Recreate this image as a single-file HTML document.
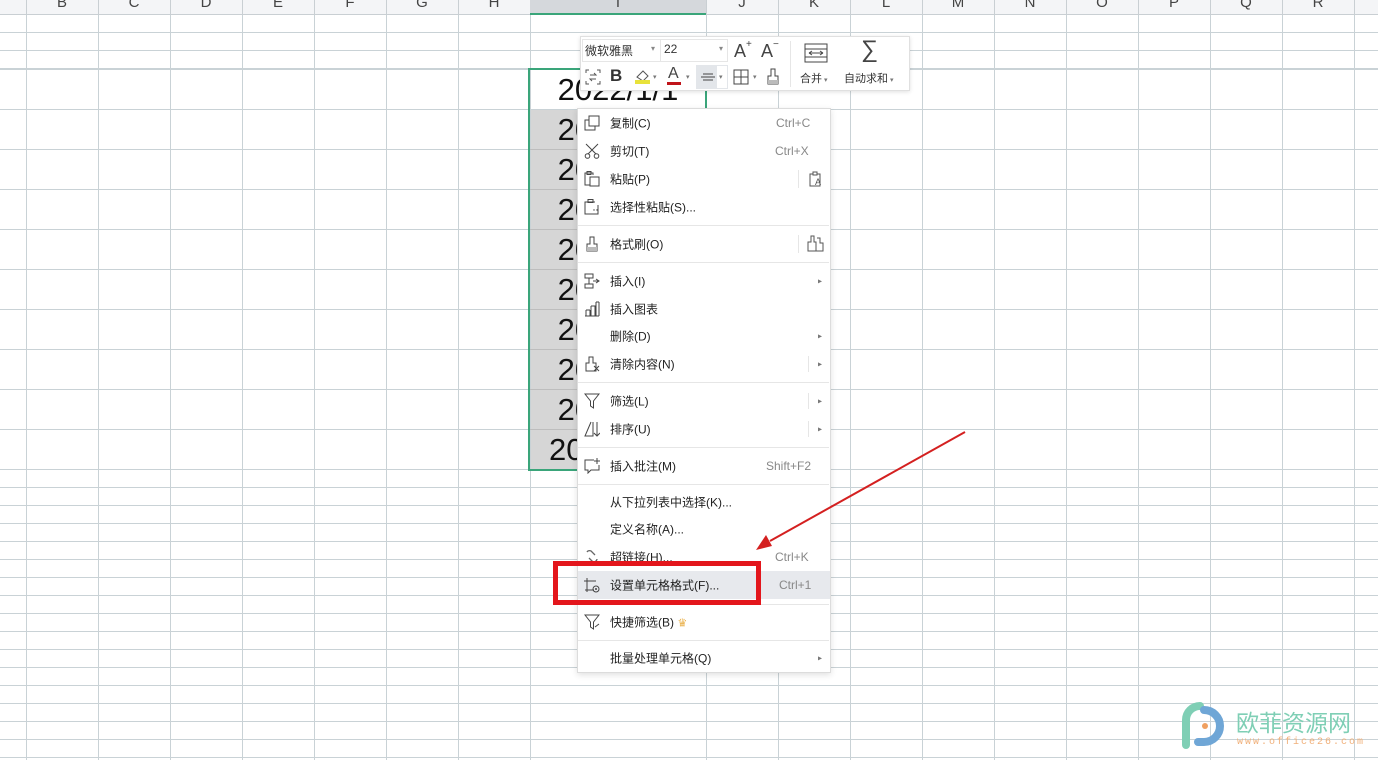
<!DOCTYPE html>
<html><head><meta charset="utf-8"><style>
*{margin:0;padding:0;box-sizing:border-box}
body{width:1378px;height:760px;overflow:hidden;background:#fff;position:relative;font-family:"Liberation Sans","Noto Sans CJK SC",sans-serif;color:#333}
.abs{position:absolute}
.hdr{left:0;top:0;width:1378px;height:15px;background:#f4f5f7;border-bottom:1px solid #c9cfd3}
.hl{position:absolute;top:-6px;font-size:15px;color:#444;transform:translateX(-50%)}
.mi{position:absolute;left:610px;font-size:12px;color:#222;transform:translateY(-50%);white-space:nowrap}
.sc{position:absolute;right:17px;font-size:12px;color:#888;transform:translateY(-50%)}
.sep{position:absolute;left:578px;width:251px;height:1px;background:#e6e6e6}
.ar{position:absolute;left:818px;font-size:8px;color:#777;transform:translateY(-50%)}
.ic{position:absolute;left:584px}
.d{position:absolute;left:530px;width:176px;height:40px;font-size:31px;text-align:center;line-height:42px;color:#111}
</style></head><body>
<div class="abs" style="left:0;top:15px;width:1378px;height:54px;background:repeating-linear-gradient(to bottom,transparent 0 17px,#c9d2d6 17px 18px)"></div>
<div class="abs" style="left:0;top:69px;width:1378px;height:400px;background:repeating-linear-gradient(to bottom,#c9d2d6 0 1px,transparent 1px 40px)"></div>
<div class="abs" style="left:0;top:469px;width:1378px;height:291px;background:repeating-linear-gradient(to bottom,#c9d2d6 0 1px,transparent 1px 18px)"></div>
<div class="abs" style="left:0;top:0;width:531px;height:760px;background:repeating-linear-gradient(to right,transparent 0 26px,#c9d2d6 26px 27px,transparent 27px 72px);background-size:72px 100%"></div>
<div class="abs" style="left:706px;top:0;width:672px;height:760px;background:repeating-linear-gradient(to right,#c9d2d6 0 1px,transparent 1px 72px)"></div>
<div class="abs" style="left:531px;top:110px;width:175px;height:359px;background:#d6d6d6"></div>
<div class="abs" style="left:531px;top:70px;width:175px;height:39px;background:#fff"></div>
<div class="abs" style="left:530px;top:110px;width:176px;height:360px;background:repeating-linear-gradient(to bottom,transparent 0 39px,#bdbdbd 39px 40px)"></div>
<div class="abs hdr"></div>
<div class="abs" style="left:530px;top:0;width:176px;height:15px;background:#d5d8dc;border-bottom:2px solid #3aa57a"></div>
<div class="abs" style="left:0;top:0;width:1378px;height:15px;background:repeating-linear-gradient(to right,transparent 0 26px,#c9cfd3 26px 27px,transparent 27px 72px);background-size:72px 100%;clip-path:inset(0 848px 0 0)"></div>
<div class="abs" style="left:706px;top:0;width:672px;height:15px;background:repeating-linear-gradient(to right,#c9cfd3 0 1px,transparent 1px 72px)"></div>
<div class="hl" style="left:62px">B</div><div class="hl" style="left:134px">C</div><div class="hl" style="left:206px">D</div><div class="hl" style="left:278px">E</div><div class="hl" style="left:350px">F</div><div class="hl" style="left:422px">G</div><div class="hl" style="left:494px">H</div><div class="hl" style="left:618px">I</div><div class="hl" style="left:742px">J</div><div class="hl" style="left:814px">K</div><div class="hl" style="left:886px">L</div><div class="hl" style="left:958px">M</div><div class="hl" style="left:1030px">N</div><div class="hl" style="left:1102px">O</div><div class="hl" style="left:1174px">P</div><div class="hl" style="left:1246px">Q</div><div class="hl" style="left:1318px">R</div>
<div class="d" style="top:69px">2022/1/1</div>
<div class="d" style="top:109px">2022/1/2</div>
<div class="d" style="top:149px">2022/1/3</div>
<div class="d" style="top:189px">2022/1/4</div>
<div class="d" style="top:229px">2022/1/5</div>
<div class="d" style="top:269px">2022/1/6</div>
<div class="d" style="top:309px">2022/1/7</div>
<div class="d" style="top:349px">2022/1/8</div>
<div class="d" style="top:389px">2022/1/9</div>
<div class="d" style="top:429px">2022/1/10</div>
<div class="abs" style="left:528px;top:68px;width:179px;height:403px;border:2px solid #3aa57a"></div>
<div class="abs" style="left:580px;top:36px;width:330px;height:55px;background:#fff;border:1px solid #e0e0e0;box-shadow:0 1px 4px rgba(0,0,0,.12)"></div>
<div class="abs" style="left:582px;top:39px;width:146px;height:23px;border:1px solid #e6e6e6"></div>
<div class="abs" style="left:660px;top:39px;width:1px;height:23px;background:#e6e6e6"></div>
<div class="abs" style="left:585px;top:42px;font-size:12px;color:#333">微软雅黑</div>
<div class="abs" style="left:651px;top:44px;font-size:8px;color:#888">▾</div>
<div class="abs" style="left:664px;top:42px;font-size:12px;color:#333">22</div>
<div class="abs" style="left:719px;top:44px;font-size:8px;color:#888">▾</div>
<div class="abs" style="left:734px;top:39px;font-size:18px;color:#444">A<sup style="font-size:10px;vertical-align:10px">+</sup></div>
<div class="abs" style="left:761px;top:39px;font-size:18px;color:#444">A<sup style="font-size:10px;vertical-align:10px">−</sup></div>
<div class="abs" style="left:790px;top:41px;width:1px;height:46px;background:#e6e6e6"></div>
<svg class="abs" style="left:804px;top:43px" width="24" height="20"><rect x="1" y="1" width="22" height="18" fill="none" stroke="#444"/><line x1="1" y1="6" x2="23" y2="6" stroke="#444"/><line x1="1" y1="14" x2="23" y2="14" stroke="#444"/><path d="M5 10H19M5 10l3-2M5 10l3 2M19 10l-3-2M19 10l-3 2" stroke="#444" fill="none"/></svg>
<div class="abs" style="left:861px;top:36px;font-size:24px;color:#444">∑</div>
<div class="abs" style="left:800px;top:70px;font-size:11px;color:#333">合并<span style="font-size:7px;color:#777"> ▾</span></div>
<div class="abs" style="left:844px;top:70px;font-size:11px;color:#333">自动求和<span style="font-size:7px;color:#777"> ▾</span></div>
<svg class="abs" style="left:585px;top:69px" width="16" height="16"><path d="M1 4V1h3M12 1h3v3M15 12v3h-3M4 15H1v-3" stroke="#555" fill="none"/><path d="M5 6h6l-2-2M11 10H5l2 2" stroke="#555" fill="none"/></svg>
<div class="abs" style="left:610px;top:66px;font-size:17px;font-weight:bold;color:#333">B</div>
<svg class="abs" style="left:634px;top:68px" width="18" height="18"><path d="M3 9l6-6 5 5-5 5z" stroke="#555" fill="none"/><rect x="1" y="12" width="15" height="4" fill="#e8e23a"/></svg>
<div class="abs" style="left:653px;top:73px;font-size:7px;color:#777">▾</div>
<div class="abs" style="left:668px;top:65px;font-size:16px;color:#444">A</div>
<div class="abs" style="left:667px;top:82px;width:14px;height:3px;background:#c0141a"></div>
<div class="abs" style="left:686px;top:73px;font-size:7px;color:#777">▾</div>
<div class="abs" style="left:696px;top:65px;width:32px;height:24px;background:#e3e6ea"></div>
<div class="abs" style="left:717px;top:66px;width:10px;height:22px;background:#fff"></div>
<svg class="abs" style="left:700px;top:71px" width="16" height="12"><path d="M3 3h10M1 6h14M3 9h10" stroke="#444"/></svg>
<div class="abs" style="left:719px;top:73px;font-size:7px;color:#777">▾</div>
<svg class="abs" style="left:733px;top:69px" width="16" height="16"><rect x="1" y="1" width="14" height="14" fill="none" stroke="#444"/><path d="M8 1v14M1 8h14" stroke="#444"/></svg>
<div class="abs" style="left:753px;top:73px;font-size:7px;color:#777">▾</div>
<svg class="abs" style="left:766px;top:68px" width="14" height="18"><path d="M5 1h4v7h3v8H2V8h3z" stroke="#444" fill="none"/><rect x="2" y="12" width="10" height="4" fill="#bbb"/></svg>
<div class="abs" style="left:577px;top:108px;width:254px;height:565px;background:#fff;border:1px solid #dcdcdc;box-shadow:0 2px 6px rgba(0,0,0,.12)"></div>
<div class="abs" style="left:578px;top:571px;width:252px;height:28px;background:#e7e9ed"></div>
<div class="sep" style="top:225px"></div><div class="sep" style="top:262px"></div><div class="sep" style="top:382px"></div><div class="sep" style="top:447px"></div><div class="sep" style="top:484px"></div><div class="sep" style="top:604px"></div><div class="sep" style="top:640px"></div>
<svg class="ic" style="top:115px" width="16" height="16"><rect x="5" y="1" width="10" height="10" fill="none" stroke="#444"/><path d="M5 5H1v10h10v-4" fill="none" stroke="#444"/></svg>
<svg class="ic" style="top:143px" width="16" height="16"><path d="M2 1l10 10M14 1L4 11" stroke="#444"/><circle cx="3.5" cy="13" r="2.3" fill="none" stroke="#444"/><circle cx="12.5" cy="13" r="2.3" fill="none" stroke="#444"/></svg>
<svg class="ic" style="top:171px" width="16" height="16"><path d="M9 4V2H1v12h5" fill="none" stroke="#444"/><rect x="6" y="6" width="9" height="9" fill="none" stroke="#444"/><rect x="3" y="0.5" width="4" height="3" fill="none" stroke="#444"/></svg>
<svg class="ic" style="top:199px" width="16" height="16"><path d="M11 3H1v12h13V6" fill="none" stroke="#444"/><rect x="4" y="0.5" width="5" height="3" fill="none" stroke="#444"/><circle cx="10" cy="11" r=".7" fill="#444"/><circle cx="13" cy="11" r=".7" fill="#444"/></svg>
<svg class="ic" style="top:236px" width="16" height="16"><path d="M6 1h4v7h3v7H3V8h3z" stroke="#444" fill="none"/><rect x="3" y="11" width="10" height="4" fill="#bbb"/></svg>
<svg class="ic" style="top:273px" width="16" height="16"><rect x="1" y="1" width="8" height="4" fill="none" stroke="#444"/><rect x="1" y="11" width="8" height="4" fill="none" stroke="#444"/><path d="M5 5v6M9 8h6M12 6l3 2-3 2" stroke="#444" fill="none"/></svg>
<svg class="ic" style="top:301px" width="16" height="16"><path d="M1 15h14M2 9v6M7 5v10M12 1v14M2 9h4M7 5h5" stroke="#444" fill="none"/><path d="M6 9v6M11 5v10M15 1v14M12 1h3" stroke="#444"/></svg>
<svg class="ic" style="top:356px" width="16" height="16"><path d="M5 1h4v6h3v8H2V7h3z" stroke="#444" fill="none"/><path d="M10 10l5 5M15 10l-5 5" stroke="#444"/></svg>
<svg class="ic" style="top:393px" width="16" height="16"><path d="M1 1h14L9.5 8v7l-3-2V8z" stroke="#444" fill="none"/></svg>
<svg class="ic" style="top:421px" width="16" height="16"><path d="M7 1L1 15h8V1" stroke="#444" fill="none"/><path d="M13 1v14M10 12l3 3 3-3" stroke="#444" fill="none"/></svg>
<svg class="ic" style="top:458px" width="16" height="16"><path d="M10 2H1v10h3v3l3-3h8V7" stroke="#444" fill="none"/><path d="M13 0v6M10 3h6" stroke="#444"/></svg>
<svg class="ic" style="top:549px" width="16" height="16"><path d="M3 3a3 3 0 0 1 5 0l3 3M5 9l3 3a3 3 0 0 0 5-2" stroke="#666" fill="none" stroke-width="1.3"/></svg>
<svg class="ic" style="top:577px" width="16" height="16"><path d="M3 1v14M0 4h12M1 13h9" stroke="#444" fill="none"/><circle cx="12" cy="12" r="3" fill="none" stroke="#444"/><circle cx="12" cy="12" r="1" fill="#444"/></svg>
<svg class="ic" style="top:614px" width="16" height="16"><path d="M1 1h14L9.5 8v7l-3-2V8z" stroke="#444" fill="none"/><path d="M11 13l4-3" stroke="#444"/></svg>
<div class="mi" style="top:123px">复制(C)</div><div class="sc" style="top:123px;left:776px">Ctrl+C</div>
<div class="mi" style="top:151px">剪切(T)</div><div class="sc" style="top:151px;left:775px">Ctrl+X</div>
<div class="mi" style="top:179px">粘贴(P)</div>
<div class="abs" style="left:798px;top:170px;width:1px;height:18px;background:#e6e6e6"></div>
<svg class="abs" style="left:808px;top:171px" width="16" height="16"><path d="M9 3h3v12H2V3h3" stroke="#555" fill="none"/><rect x="5" y="1" width="4" height="3" fill="none" stroke="#555"/><text x="7" y="14" font-size="9" fill="#555" font-family="Liberation Sans">A</text></svg>
<div class="mi" style="top:207px">选择性粘贴(S)...</div>
<div class="mi" style="top:244px">格式刷(O)</div>
<div class="abs" style="left:798px;top:235px;width:1px;height:18px;background:#e6e6e6"></div>
<svg class="abs" style="left:807px;top:235px" width="18" height="18"><path d="M4 1h3v6h2v9H1V7h3zM10 3h3v5h3v8h-7" stroke="#555" fill="none"/></svg>
<div class="mi" style="top:281px">插入(I)</div><div class="ar" style="top:281px">▸</div>
<div class="mi" style="top:309px">插入图表</div>
<div class="mi" style="top:336px">删除(D)</div><div class="ar" style="top:336px">▸</div>
<div class="mi" style="top:364px">清除内容(N)</div><div class="ar" style="top:364px">▸</div>
<div class="abs" style="left:808px;top:356px;width:1px;height:16px;background:#e6e6e6"></div>
<div class="mi" style="top:401px">筛选(L)</div><div class="ar" style="top:401px">▸</div>
<div class="abs" style="left:808px;top:393px;width:1px;height:16px;background:#e6e6e6"></div>
<div class="mi" style="top:429px">排序(U)</div><div class="ar" style="top:429px">▸</div>
<div class="abs" style="left:808px;top:421px;width:1px;height:16px;background:#e6e6e6"></div>
<div class="mi" style="top:466px">插入批注(M)</div><div class="sc" style="top:466px;left:766px">Shift+F2</div>
<div class="mi" style="top:502px">从下拉列表中选择(K)...</div>
<div class="mi" style="top:529px">定义名称(A)...</div>
<div class="mi" style="top:557px">超链接(H)...</div><div class="sc" style="top:557px;left:775px">Ctrl+K</div>
<div class="mi" style="top:585px">设置单元格格式(F)...</div><div class="sc" style="top:585px;left:779px">Ctrl+1</div>
<div class="mi" style="top:622px">快捷筛选(B) <span style="color:#e9b04a;font-size:11px">♛</span></div>
<div class="mi" style="top:658px">批量处理单元格(Q)</div><div class="ar" style="top:658px">▸</div>
<div class="abs" style="left:553px;top:561px;width:208px;height:44px;border:5px solid #e3161c"></div>
<svg class="abs" style="left:0;top:0" width="1378" height="760"><line x1="965" y1="432" x2="770" y2="541" stroke="#d42020" stroke-width="2"/><path d="M756 550l10-15 6 11z" fill="#d42020"/></svg>
<svg class="abs" style="left:1178px;top:700px" width="52" height="52"><path d="M8 45V20a14 14 0 0 1 14-14" stroke="#7fcfb5" stroke-width="8" fill="none" stroke-linecap="round"/><path d="M26 10a16 16 0 0 1 0 32h-6" stroke="#6fa6d6" stroke-width="8" fill="none" stroke-linecap="round"/><circle cx="27" cy="26" r="3" fill="#f0a060"/></svg>
<div class="abs" style="left:1236px;top:704px;font-size:23px;color:#7fcfb5;letter-spacing:0px">欧菲资源网</div>
<div class="abs" style="left:1237px;top:737px;font-size:10px;color:#f0b07a;letter-spacing:2px;font-family:'Liberation Mono',monospace">www.office26.com</div>
</body></html>
